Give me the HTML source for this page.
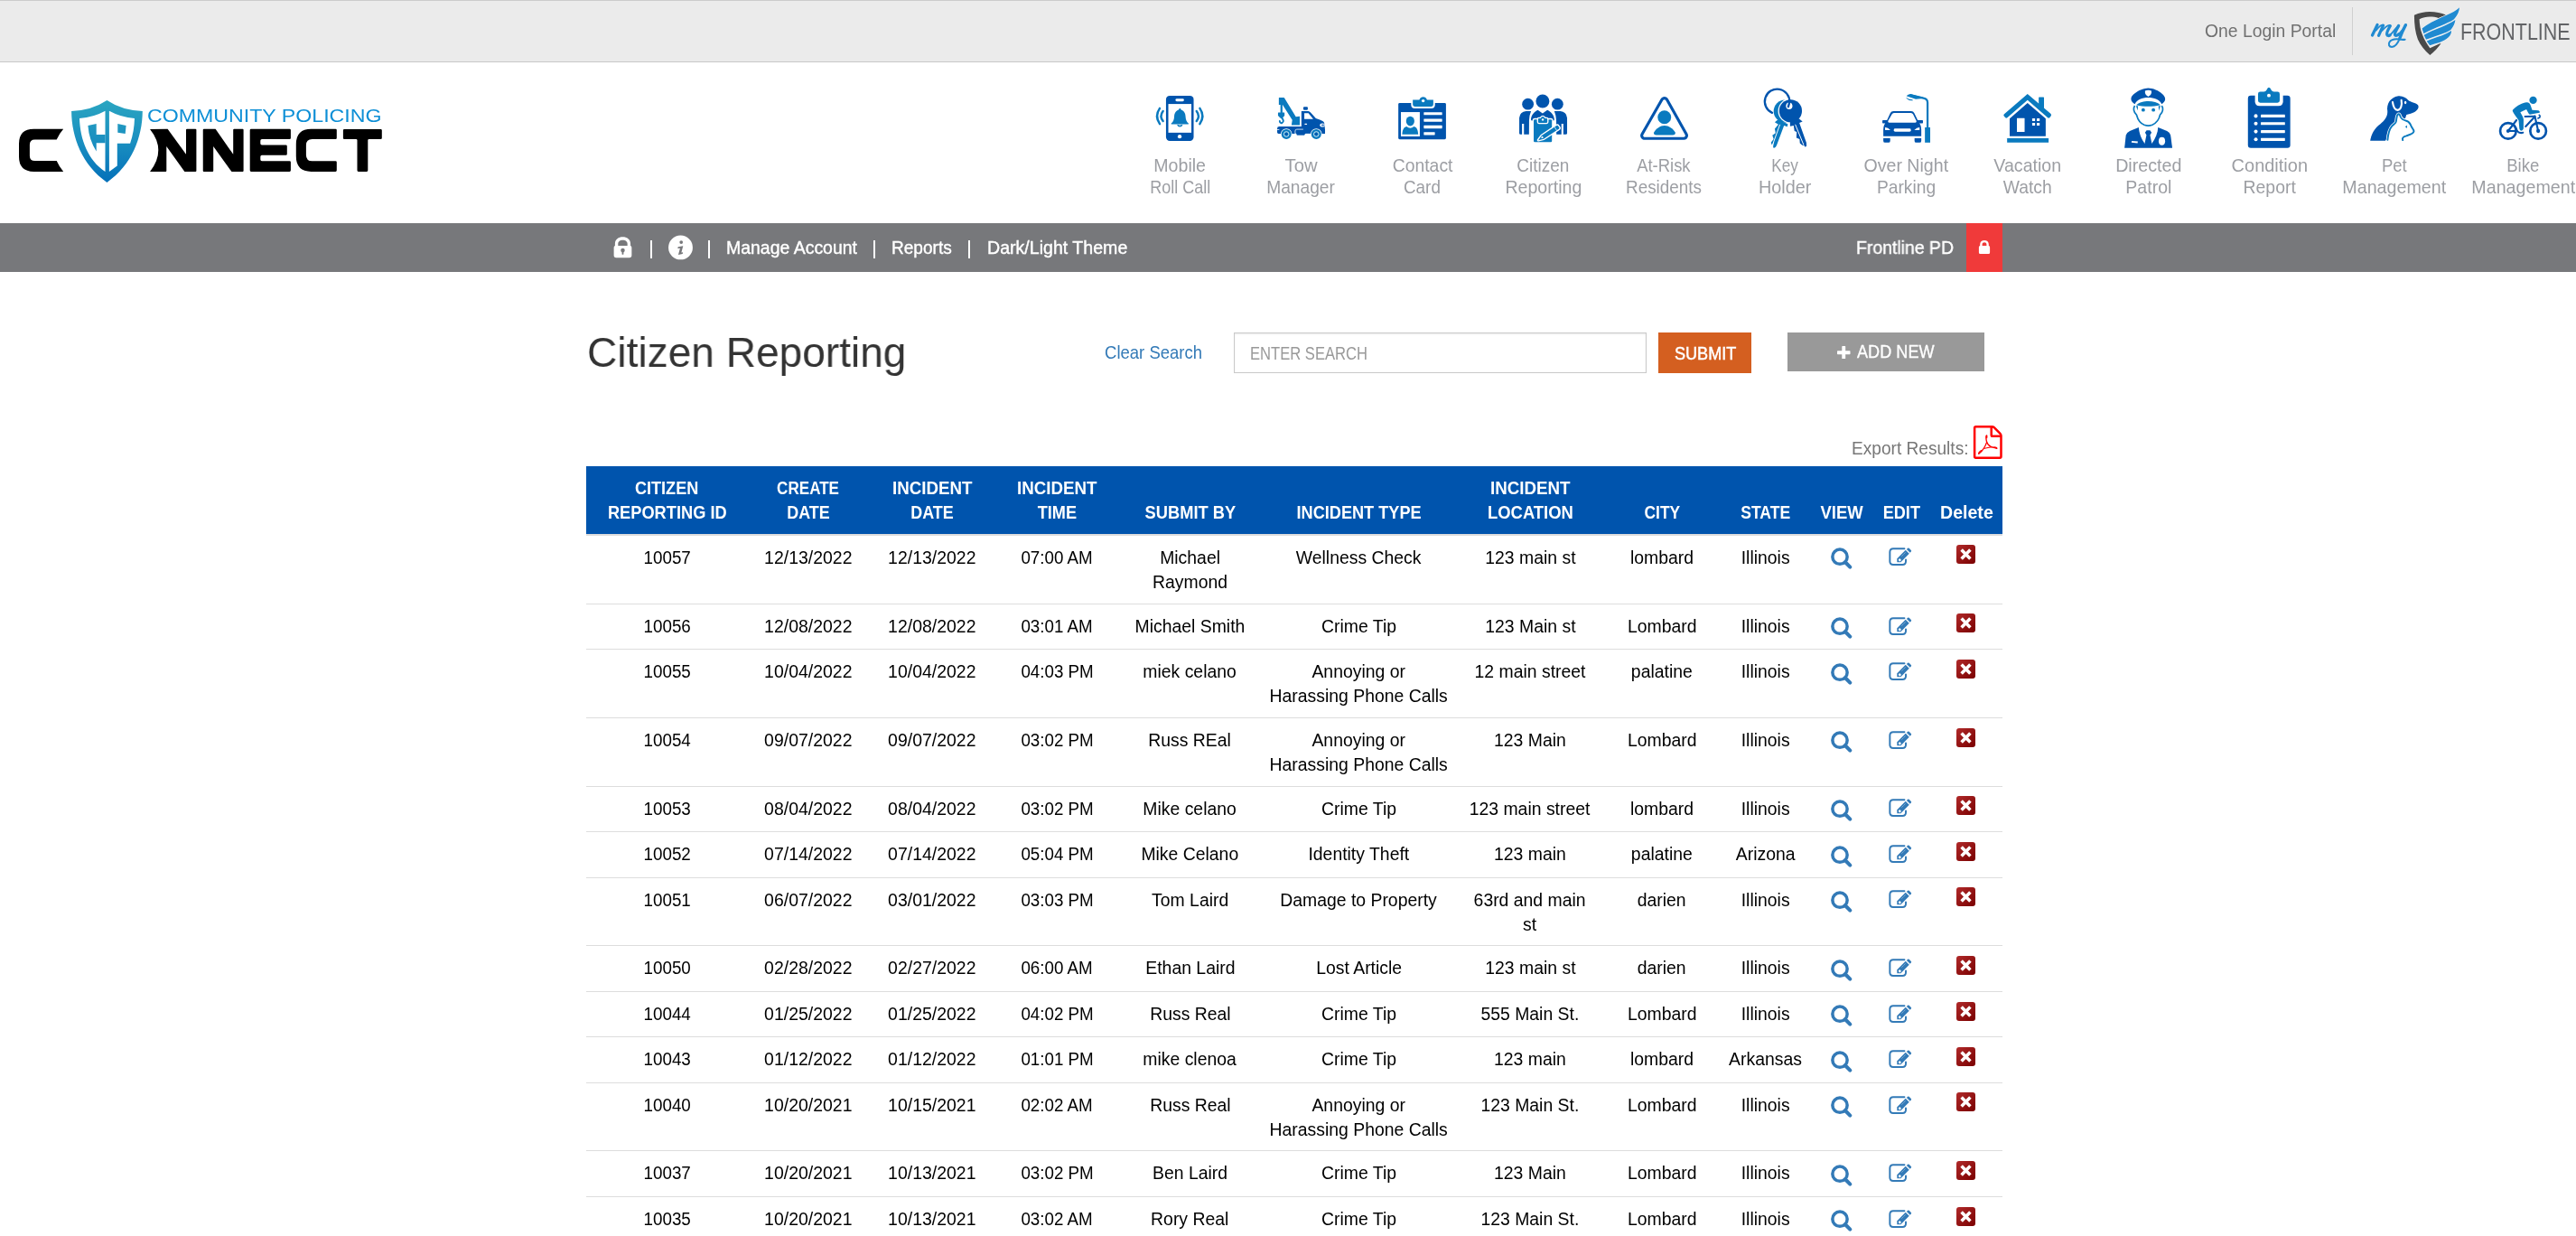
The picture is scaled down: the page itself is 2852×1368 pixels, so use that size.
<!DOCTYPE html><html><head><meta charset="utf-8"><title>Citizen Reporting</title><style>
html,body{margin:0;padding:0;background:#fff;}
#page{position:absolute;left:0;top:0;width:2852px;height:1368px;overflow:hidden;will-change:transform;}
body{width:2852px;height:1368px;overflow:hidden;position:relative;font-family:"Liberation Sans",sans-serif;color:#000;}
.tx{position:absolute;white-space:nowrap;line-height:1;display:inline-block;}
.abs{position:absolute;}
#topbar{position:absolute;left:0;top:0;width:2852px;height:67px;background:#ebebeb;border-top:1px solid #cbcbcb;border-bottom:1px solid #c8c8c8;box-sizing:content-box;}
#nav{position:absolute;left:0;top:247px;width:2852px;height:54px;background:#77787b;}
#lockbtn{position:absolute;left:2177px;top:247px;width:40px;height:54px;background:#f03a3a;}
#search{position:absolute;left:1366px;top:368px;width:457px;height:45px;box-sizing:border-box;border:1px solid #c9c9c9;background:#fff;box-shadow:inset 0 1px 2px rgba(0,0,0,.08);}
#submit{position:absolute;left:1836px;top:368px;width:103px;height:45px;background:#d45f20;}
#addnew{position:absolute;left:1979px;top:368px;width:218px;height:43px;background:#999;}
table{position:absolute;left:649px;top:516px;width:1568px;border-collapse:collapse;table-layout:fixed;font-size:19.9px;line-height:27px;}
th{font-size:19.6px;background:#0054ad;color:#fff;font-weight:700;vertical-align:bottom;padding:11.4px 0 9.6px 0;text-align:center;border-bottom:2px solid #ddd;height:54px;line-height:27px;white-space:nowrap;}
td{vertical-align:top;text-align:center;padding:11px 0 0 0;border-top:1px solid #ddd;white-space:nowrap;position:relative;}
tr.s td{height:38.46px;}
tr.d td{height:63.78px;}
tbody tr:first-child td{height:63.72px;}
tbody tr:first-child td svg{margin-top:-1px;}
.h{display:inline-block;}
.c{display:inline-block;transform:scaleX(.975);}
.c1{transform:scaleX(.945);}
.c2{transform:scaleX(.978);}
.c4{transform:scaleX(.943);}
td svg{position:absolute;}
svg.iv{left:21.2px;top:13.4px;}
svg.ie{left:13.2px;top:7.8px;}
svg.id{left:28.8px;top:10.7px;}
</style></head><body><div id="page">
<svg width="0" height="0" style="position:absolute"><defs><linearGradient id="dg" x1="0" y1="0" x2="1" y2="1"><stop offset="0" stop-color="#b02a2a"/><stop offset="1" stop-color="#7a0000"/></linearGradient><symbol id="iv" viewBox="0 0 26 26"><circle cx="11" cy="11.2" r="8.15" fill="none" stroke="#337ab7" stroke-width="3.5"/><path d="M17,17.3 L22.3,22.6" stroke="#337ab7" stroke-width="4.1" stroke-linecap="round"/></symbol><symbol id="ie" viewBox="1639.3 93.7 843 749"><path fill="none" stroke="#337ab7" stroke-width="46" stroke-linecap="round" d="M2165,263 L1875,263 Q1788,263 1788,350 L1788,590 Q1788,677 1875,677 L2115,677 Q2202,677 2202,590 L2202,548"/><path fill="#337ab7" d="M1975,520 L2195,300 L2290,395 L2070,615 L1975,615 Z"/><path fill="#337ab7" d="M2222,278 L2250,250 Q2268,235 2288,252 L2338,302 Q2355,322 2338,340 L2312,368 Z"/><path fill="#fff" d="M2010,548 L2042,515 L2082,555 L2060,590 L2030,590 Z"/><path fill="none" stroke="#fff" stroke-width="12" stroke-dasharray="14 8" d="M2090,462 L2200,352"/></symbol><symbol id="id" viewBox="0 0 21 21"><rect x="0" y="0" width="21" height="21" rx="3" fill="url(#dg)"/><path d="M5.6,5.6 L15.4,15.4 M15.4,5.6 L5.6,15.4" stroke="#fff" stroke-width="3.6"/></symbol></defs></svg>
<div id="topbar"></div>
<span class="tx" style="left:2440.50px;top:23.55px;font-size:20.5px;color:#707070;transform:scaleX(0.9437);transform-origin:left center;">One Login Portal</span>
<div class="abs" style="left:2604px;top:8px;width:1px;height:53px;background:#cfcfcf"></div>
<svg class="abs" style="left:2615px;top:2px" width="120" height="64" viewBox="0 0 2318 1236"><path fill="#4a4a4a" d="M1118,285 C1230,235 1340,212 1450,213 C1580,215 1700,240 1795,280 L1640,348 C1580,328 1520,320 1450,320 C1370,322 1300,340 1228,372 C1232,480 1250,600 1292,700 C1330,800 1390,900 1455,990 L1665,893 L1690,893 C1620,990 1540,1070 1455,1138 C1340,1040 1250,930 1195,800 C1140,660 1120,480 1118,285 Z"/><path fill="#208ad1" stroke="#f4f4f4" stroke-width="22" stroke-linejoin="round" paint-order="stroke" d="M1285,570 C1400,480 1560,400 1700,335 C1850,270 1990,215 2085,122 C2080,200 2050,290 1965,378 C1890,430 1790,470 1700,505 C1570,560 1440,610 1320,682 Z"/><path fill="#208ad1" stroke="#f4f4f4" stroke-width="22" stroke-linejoin="round" paint-order="stroke" d="M1325,712 C1440,640 1570,590 1700,540 C1800,500 1910,450 1998,388 C1990,450 1965,520 1900,600 C1840,640 1770,665 1700,692 C1590,730 1480,765 1372,808 Z"/><path fill="#208ad1" stroke="#f4f4f4" stroke-width="22" stroke-linejoin="round" paint-order="stroke" d="M1385,842 C1490,790 1600,755 1700,722 C1770,695 1850,660 1912,618 C1915,660 1900,710 1850,760 C1800,810 1730,840 1660,868 C1590,890 1520,905 1452,932 Z"/><g fill="none" stroke="#208ad1" stroke-linecap="round" stroke-linejoin="round"><path stroke-width="63" d="M330,490 L222,715"/><path stroke-width="37" d="M300,610 C340,560 400,500 440,495"/><path stroke-width="63" d="M455,505 L358,722"/><path stroke-width="37" d="M430,615 C480,560 540,505 590,500"/><path stroke-width="63" d="M605,515 C570,580 520,660 535,700 C545,730 575,730 600,712"/><path stroke-width="63" d="M785,510 C750,580 690,670 705,705 C720,735 760,720 790,690"/><path stroke-width="37" d="M600,712 C650,670 720,570 785,505"/><path stroke-width="63" d="M935,495 C890,580 840,690 805,790"/><path stroke-width="37" d="M790,690 C840,640 900,560 945,490"/><path stroke-width="40" d="M805,790 C770,880 720,960 640,965 C580,965 560,910 590,860 C630,800 720,790 800,800 C850,810 890,810 920,805"/></g></svg>
<span class="tx" style="left:2724.40px;top:22.82px;font-size:24.9px;color:#626366;transform:scaleX(0.8620);transform-origin:left center;">FRONTLINE</span>
<svg class="abs" style="left:0;top:100px" width="440" height="110" viewBox="0 100 440 110"><defs><linearGradient id="lg" gradientUnits="userSpaceOnUse" x1="0" y1="111" x2="0" y2="202"><stop offset="0" stop-color="#2aa5c1"/><stop offset="0.5" stop-color="#1a8fc0"/><stop offset="1" stop-color="#0470b9"/></linearGradient></defs><path fill="#000" d="M37.4,142.7 L70.2,142.7 Q65.5,148 62.7,154.4 L38.6,154.4 Q32.9,154.4 32.9,160.1 L32.9,172.4 Q32.9,178.1 38.6,178.1 L62.7,178.1 Q65.5,184.5 70.2,189.9 L37.4,189.9 Q21,189.9 21,173.5 L21,159.1 Q21,142.7 37.4,142.7 Z"/><path fill="url(#lg)" d="M118.45,111.1 Q101.8,122.2 79.1,123.1 C79.3,152 91,183 118.45,201.9 C145.9,183 157.6,152 157.8,123.1 Q135.1,122.2 118.45,111.1 Z"/><path fill="#fff" d="M116.5,122.7 Q104,129.6 88,131.1 C88.6,154 97.5,178 116.5,189.9 Z"/><path fill="#fff" d="M120.9,122.7 Q133.5,129.6 149,131.1 Q148.6,146 144.1,158.7 L129.8,158.7 L129.8,183.6 L120.9,189.9 Z"/><path fill="url(#lg)" d="M130.3,136.9 L139.6,139.1 L138.7,148 L130.3,146.7 Z"/><path fill="url(#lg)" d="M97.4,139.1 L106.7,136.9 L106.7,148.9 L116.6,148.9 L116.6,158.3 L106.7,158.3 L106.7,167.6 Q98.6,155 97.4,139.1 Z"/><path fill="#000" d="M166.05,143 L185.6,142.8 L206,170.8 L206,143.8 Q206,142.8 207,142.8 L216.4,142.8 Q217.4,142.8 217.4,143.8 L217.4,189.1 Q217.4,190.1 216.4,190.1 L204.4,190.1 L184.3,162.1 L184.3,189.1 Q184.3,190.1 183.3,190.1 L166.05,189.9 Q184.6,166.4 166.05,143 Z"/><path fill="#000" d="M225.75,142.8 L238.6,142.8 L258.2,170.8 L258.2,143.8 Q258.2,142.8 259.2,142.8 L268.6,142.8 Q269.6,142.8 269.6,143.8 L269.6,189.1 Q269.6,190.1 268.6,190.1 L256.5,190.1 L236.2,162.1 L236.2,189.1 Q236.2,190.1 235.2,190.1 L225.75,190.1 Q224.75,190.1 224.75,189.1 L224.75,143.8 Q224.75,142.8 225.75,142.8 Z"/><path fill="#000" d="M278,142.7 L320.6,142.7 Q321.9,142.7 321.9,144 L321.9,152.7 Q321.9,154 320.6,154 L290,154 Q288.3,154 288.3,155.7 L288.3,158.8 Q288.3,160.5 290,160.5 L316.5,160.5 Q317.8,160.5 317.8,161.8 L317.8,170.4 Q317.8,171.7 316.5,171.7 L290,171.7 Q288.3,171.7 288.3,173.4 L288.3,176.5 Q288.3,178.2 290,178.2 L320.6,178.2 Q321.9,178.2 321.9,179.5 L321.9,188.6 Q321.9,189.9 320.6,189.9 L278,189.9 Q276.7,189.9 276.7,188.6 L276.7,144 Q276.7,142.7 278,142.7 Z"/><path fill="#000" d="M344.6,142.7 L371.5,142.7 Q372.8,142.7 372.8,144 L372.8,152.7 Q372.8,154 371.5,154 L345.7,154 Q338.9,154 338.9,160.8 L338.9,171.4 Q338.9,178.2 345.7,178.2 L371.5,178.2 Q372.8,178.2 372.8,179.5 L372.8,188.6 Q372.8,189.9 371.5,189.9 L344.6,189.9 Q327.8,189.9 327.8,173.1 L327.8,159.5 Q327.8,142.7 344.6,142.7 Z"/><path fill="#000" d="M381.2,143 L421.5,143 Q422.8,143 422.8,144.3 L422.8,152.7 Q422.8,154 421.5,154 L408.6,154 Q407.3,154 407.3,155.3 L407.3,188.6 Q407.3,189.9 406,189.9 L396.8,189.9 Q395.5,189.9 395.5,188.6 L395.5,155.3 Q395.5,154 394.2,154 L381.2,154 Q379.9,154 379.9,152.7 L379.9,144.3 Q379.9,143 381.2,143 Z"/></svg>
<span class="tx" style="left:163.20px;top:117.97px;font-size:20px;color:#0d8fd6;transform:scaleX(1.1580);transform-origin:left center;">COMMUNITY POLICING</span>
<svg class="abs" style="left:1270px;top:98px" width="72" height="66" viewBox="0 0 1348 1236"><rect x="392" y="148" width="573" height="937" rx="78" fill="#0054ad"/>
<rect x="440" y="320" width="478" height="595" fill="#fff"/>
<rect x="588" y="212" width="177" height="56" rx="28" fill="#fff"/>
<circle cx="675" cy="997" r="40" fill="#fff"/>
<path fill="#0a7abf" d="M680,405 Q700,420 705,440 C770,460 795,520 797,580 C800,650 820,690 858,722 L858,738 L500,738 L500,722 C540,690 560,650 562,580 C565,520 590,460 655,440 Q660,420 680,405 Z"/>
<path fill="#0a7abf" d="M620,748 L738,748 Q725,795 679,795 Q633,795 620,748 Z"/>
<path fill="#fff" opacity=".55" d="M645,750 L712,750 Q700,772 679,772 Q658,772 645,750 Z"/>
<g fill="none" stroke="#0a7abf" stroke-width="46" stroke-linecap="round">
<path d="M262,410 Q150,572 262,733"/><path d="M330,468 Q250,572 330,675"/>
<path d="M1093,410 Q1205,572 1093,733"/><path d="M1025,468 Q1105,572 1025,675"/></g></svg>
<span class="tx" style="left:1277.46px;top:174.04px;font-size:19.8px;color:#9c9ea3;transform:scaleX(0.9900);transform-origin:center center;">Mobile</span>
<span class="tx" style="left:1269.77px;top:197.84px;font-size:19.8px;color:#9c9ea3;transform:scaleX(0.9110);transform-origin:center center;">Roll Call</span>
<svg class="abs" style="left:1404px;top:98px" width="72" height="66" viewBox="0 0 1348 1236"><path fill="#0a7abf" d="M222,192 Q222,185 230,185 L322,185 Q330,185 335,193 L575,585 L655,575 L655,760 L485,760 L500,650 L300,335 L222,335 Z"/>
<rect x="255" y="330" width="42" height="175" fill="#0a7abf"/>
<path fill="#0a7abf" d="M205,505 Q205,498 212,498 L333,498 Q340,498 340,505 L340,560 L300,610 L250,610 L205,560 Z"/>
<path fill="none" stroke="#0a7abf" stroke-width="36" stroke-linecap="round" d="M275,600 C320,640 330,690 290,712 C265,722 240,705 240,672"/>
<rect x="730" y="378" width="92" height="68" rx="18" fill="#0054ad"/>
<path fill="#0054ad" d="M690,470 L830,470 Q860,475 880,495 L990,620 Q1080,650 1130,675 Q1160,690 1165,720 L1180,850 L1180,925 Q1180,935 1170,935 L215,935 Q188,935 188,908 L188,830 Q188,785 230,785 L690,785 Z"/>
<path fill="#fff" d="M750,510 L835,510 L935,632 L750,632 Z"/>
<rect x="755" y="728" width="52" height="20" rx="8" fill="#fff"/>
<rect x="186" y="846" width="45" height="14" fill="#fff"/>
<ellipse cx="1125" cy="757" rx="52" ry="38" fill="#fff"/><ellipse cx="1135" cy="757" rx="34" ry="18" fill="#0054ad" opacity=".75"/>
<path fill="#0054ad" stroke="#fff" stroke-width="14" d="M560,880 Q560,845 595,845 L720,845 L900,845 L900,935 L775,935 Q770,975 740,975 L610,975 Q580,975 578,935 L560,935 Z"/>
<rect x="730" y="800" width="200" height="130" fill="#0054ad"/>
<circle cx="378" cy="945" r="118" fill="#fff"/><circle cx="378" cy="945" r="103" fill="#0a7abf"/><circle cx="378" cy="945" r="52" fill="none" stroke="#fff" stroke-width="15"/><circle cx="378" cy="945" r="26" fill="#0054ad"/>
<circle cx="998" cy="945" r="118" fill="#fff"/><circle cx="998" cy="945" r="103" fill="#0a7abf"/><circle cx="998" cy="945" r="52" fill="none" stroke="#fff" stroke-width="15"/><circle cx="998" cy="945" r="26" fill="#0054ad"/></svg>
<span class="tx" style="left:1422.91px;top:174.04px;font-size:19.8px;color:#9c9ea3;transform:scaleX(1.0231);transform-origin:center center;">Tow</span>
<span class="tx" style="left:1401.46px;top:197.84px;font-size:19.8px;color:#9c9ea3;transform:scaleX(0.9708);transform-origin:center center;">Manager</span>
<svg class="abs" style="left:1538px;top:98px" width="72" height="66" viewBox="0 0 1348 1236"><rect x="190" y="300" width="988" height="755" rx="28" fill="#0054ad"/>
<path fill="#fff" d="M455,230 L950,230 L950,335 Q950,410 875,410 L530,410 Q455,410 455,335 Z"/>
<path fill="#0a7abf" d="M490,232 L625,232 Q650,175 705,175 Q760,175 785,232 L915,232 L915,325 Q915,375 865,375 L540,375 Q490,375 490,325 Z"/>
<circle cx="705" cy="255" r="32" fill="#fff"/>
<rect x="243" y="488" width="392" height="504" fill="#fff"/>
<ellipse cx="437" cy="675" rx="86" ry="100" fill="#0a7abf"/>
<path fill="#0a7abf" d="M270,950 C275,860 300,800 360,785 Q437,850 515,785 C575,800 598,860 602,950 Z"/>
<rect x="718" y="490" width="380" height="60" rx="8" fill="#fff"/><rect x="718" y="626" width="380" height="62" rx="8" fill="#fff"/><rect x="718" y="765" width="380" height="62" rx="8" fill="#fff"/><rect x="718" y="902" width="230" height="62" rx="8" fill="#fff"/></svg>
<span class="tx" style="left:1540.51px;top:174.04px;font-size:19.8px;color:#9c9ea3;transform:scaleX(0.9782);transform-origin:center center;">Contact</span>
<span class="tx" style="left:1553.15px;top:197.84px;font-size:19.8px;color:#9c9ea3;transform:scaleX(0.9536);transform-origin:center center;">Card</span>
<svg class="abs" style="left:1672px;top:98px" width="72" height="66" viewBox="0 0 1348 1236"><circle cx="367" cy="322" r="120" fill="#0054ad"/><circle cx="672" cy="262" r="140" fill="#0054ad"/><circle cx="980" cy="322" r="120" fill="#0054ad"/>
<path fill="#0054ad" d="M188,925 L188,610 Q200,480 330,470 L432,470 Q395,560 392,660 L390,950 L285,950 L285,730 L245,730 L245,950 L215,950 Q188,950 188,925 Z"/>
<path fill="#0054ad" d="M1180,925 L1180,610 Q1168,480 1038,470 L915,470 Q952,560 955,660 L958,950 L1062,950 L1062,730 L1102,730 L1102,950 L1153,950 Q1180,950 1180,925 Z"/>
<path fill="#0054ad" d="M430,640 C440,540 500,480 572,445 L672,515 L770,445 C845,480 905,540 915,640 Q915,665 890,665 L455,665 Q430,665 430,640 Z"/>
<rect x="487" y="640" width="378" height="470" rx="22" fill="#0a7abf" stroke="#fff" stroke-width="50" paint-order="stroke"/>
<path fill="#0a7abf" stroke="#fff" stroke-width="50" paint-order="stroke" stroke-linejoin="round" d="M580,635 Q580,620 595,620 L630,620 Q650,580 675,580 Q700,580 720,620 L755,620 Q770,620 770,635 L770,695 Q770,710 755,710 L595,710 Q580,710 580,695 Z"/>
<circle cx="675" cy="645" r="22" fill="#fff"/>
<path fill="#0a7abf" stroke="#fff" stroke-width="52" paint-order="stroke" stroke-linejoin="round" d="M582,1070 L651,976 L962,768 Q982,756 996,776 L1016,806 Q1028,826 1008,838 L695,1042 Z"/>
<path fill="none" stroke="#fff" stroke-width="14" d="M915,792 L965,868"/>
<path fill="#fff" d="M640,1008 L672,990 L690,1020 L652,1034 Z"/></svg>
<span class="tx" style="left:1678.47px;top:174.04px;font-size:19.8px;color:#9c9ea3;transform:scaleX(0.9592);transform-origin:center center;">Citizen</span>
<span class="tx" style="left:1665.81px;top:197.84px;font-size:19.8px;color:#9c9ea3;transform:scaleX(0.9897);transform-origin:center center;">Reporting</span>
<svg class="abs" style="left:1806px;top:98px" width="72" height="66" viewBox="0 0 1348 1236"><path d="M688,260 L278,975 L1090,975 Z" fill="#0054ad" stroke="#0054ad" stroke-width="180" stroke-linejoin="round"/>
<path d="M688,260 L278,975 L1090,975 Z" fill="#fff" stroke="#fff" stroke-width="62" stroke-linejoin="round"/>
<circle cx="688" cy="595" r="140" fill="#0a7abf"/>
<path fill="#0a7abf" d="M468,915 C520,830 600,770 688,770 C780,770 860,830 915,915 Q918,965 860,965 L520,965 Q462,965 468,915 Z"/></svg>
<span class="tx" style="left:1810.33px;top:174.04px;font-size:19.8px;color:#9c9ea3;transform:scaleX(0.9318);transform-origin:center center;">At-Risk</span>
<span class="tx" style="left:1798.22px;top:197.84px;font-size:19.8px;color:#9c9ea3;transform:scaleX(0.9537);transform-origin:center center;">Residents</span>
<svg class="abs" style="left:1940px;top:92px" width="72" height="76" viewBox="0 0 1171 1236"><circle cx="590" cy="505" r="205" fill="#0a7abf"/>
<path fill="#0a7abf" d="M405,705 L460,660 L640,735 L632,785 L572,765 L440,1120 Q425,1160 395,1168 L375,1160 L380,1110 L395,1060 L350,1110 L338,1065 L385,1010 L362,940 L420,900 L405,822 L470,745 Z"/>
<path fill="none" stroke="#fff" stroke-width="16" d="M498,745 L372,1095"/>
<circle cx="690" cy="500" r="226" fill="#fff"/>
<circle cx="690" cy="500" r="205" fill="#0054ad"/>
<path fill="#0054ad" d="M680,700 L840,640 L905,690 L848,715 L975,1075 L978,1130 L955,1152 L930,1120 L900,1118 L858,1080 L852,1010 L795,985 L800,880 L760,862 L745,765 L682,778 Z"/>
<path fill="none" stroke="#fff" stroke-width="16" d="M775,745 L925,1110"/>
<ellipse cx="665" cy="410" rx="58" ry="62" fill="#fff"/>
<path fill="none" stroke="#0054ad" stroke-width="38" stroke-linecap="round" d="M358,534 A223,223 0 1 1 671,345 L648,425"/></svg>
<span class="tx" style="left:1959.35px;top:174.04px;font-size:19.8px;color:#9c9ea3;transform:scaleX(0.8711);transform-origin:center center;">Key</span>
<span class="tx" style="left:1947.26px;top:197.84px;font-size:19.8px;color:#9c9ea3;transform:scaleX(1.0020);transform-origin:center center;">Holder</span>
<svg class="abs" style="left:2074px;top:98px" width="72" height="66" viewBox="0 0 1348 1236"><path fill="#0054ad" d="M280,665 L352,510 Q372,470 420,470 L785,470 Q830,470 850,510 L925,665 Q995,760 995,850 L995,990 L208,990 L208,850 Q208,760 280,665 Z"/>
<rect x="188" y="655" width="130" height="65" rx="14" fill="#0054ad"/><rect x="900" y="655" width="130" height="65" rx="14" fill="#0054ad"/>
<path fill="#fff" d="M430,505 L780,505 Q812,505 825,535 L895,672 Q900,705 870,708 L330,708 Q298,705 305,672 L385,535 Q398,505 430,505 Z"/>
<path fill="#fff" d="M245,862 L245,805 Q300,800 355,862 Z"/><path fill="#fff" d="M960,862 L960,805 Q905,800 850,862 Z"/>
<rect x="425" y="830" width="355" height="62" rx="28" fill="#fff"/>
<path fill="#0054ad" d="M208,1030 L350,1030 L350,1085 Q350,1120 315,1120 L243,1120 Q208,1120 208,1085 Z"/><path fill="#0054ad" d="M855,1030 L995,1030 L995,1085 Q995,1120 960,1120 L890,1120 Q855,1120 855,1085 Z"/>
<rect x="1070" y="805" width="110" height="315" fill="#0a7abf"/>
<path fill="none" stroke="#0a7abf" stroke-width="42" d="M1125,810 L1125,290 Q1125,215 1040,200 L760,135"/>
<path fill="#0a7abf" d="M685,155 Q720,115 770,112 L1060,190 L985,212 L880,218 Z"/>
<path fill="#0a7abf" d="M678,198 Q740,262 822,246 L812,228 Q735,228 692,192 Z"/></svg>
<span class="tx" style="left:2063.33px;top:174.04px;font-size:19.8px;color:#9c9ea3;transform:scaleX(0.9900);transform-origin:center center;">Over Night</span>
<span class="tx" style="left:2077.06px;top:197.84px;font-size:19.8px;color:#9c9ea3;transform:scaleX(0.9720);transform-origin:center center;">Parking</span>
<svg class="abs" style="left:2208px;top:98px" width="72" height="66" viewBox="0 0 1348 1236"><rect x="920" y="178" width="110" height="250" rx="8" fill="#0a7abf"/>
<path fill="#0a7abf" d="M688,112 L1172,525 Q1190,548 1172,570 L1145,605 Q1128,622 1108,605 L688,240 L268,605 Q248,622 230,605 L200,570 Q182,548 205,528 Z"/>
<path fill="#0054ad" d="M688,300 L1065,625 L1065,980 Q1065,990 1055,990 L328,990 Q318,990 318,980 L318,625 Z"/>
<rect x="468" y="612" width="160" height="286" rx="6" fill="#fff"/>
<rect x="785" y="618" width="60" height="58" rx="10" fill="#fff"/><rect x="880" y="618" width="60" height="58" rx="10" fill="#fff"/><rect x="785" y="712" width="60" height="58" rx="10" fill="#fff"/><rect x="880" y="712" width="60" height="58" rx="10" fill="#fff"/>
<rect x="265" y="1030" width="860" height="90" rx="8" fill="#0a7abf"/></svg>
<span class="tx" style="left:2206.64px;top:174.04px;font-size:19.8px;color:#9c9ea3;transform:scaleX(0.9905);transform-origin:center center;">Vacation</span>
<span class="tx" style="left:2216.74px;top:197.84px;font-size:19.8px;color:#9c9ea3;transform:scaleX(0.9742);transform-origin:center center;">Watch</span>
<svg class="abs" style="left:2342px;top:92px" width="72" height="76" viewBox="0 0 1171 1236"><path fill="#0054ad" d="M350,378 C270,330 260,260 330,200 C420,120 520,90 590,88 C680,90 780,130 850,200 C920,270 910,330 835,378 C800,300 700,262 590,262 C480,262 390,300 350,378 Z"/>
<path fill="#fff" d="M535,140 Q592,108 650,140 L650,178 Q640,225 592,242 Q545,225 535,178 Z"/>
<path fill="#0a7abf" d="M375,395 C430,340 520,325 592,325 C680,325 760,345 812,395 C740,412 660,420 592,420 C520,420 440,412 375,395 Z"/>
<path fill="none" stroke="#0a7abf" stroke-width="28" stroke-linejoin="round" d="M350,408 C318,450 325,520 382,572 C400,640 440,720 520,752 Q592,778 665,752 C740,720 790,640 805,572 C860,520 868,450 835,408"/>
<path fill="#0a7abf" d="M372,412 L408,412 L402,492 Z"/><path fill="#0a7abf" d="M812,412 L776,412 L784,496 Z"/>
<circle cx="502" cy="482" r="32" fill="#0a7abf"/><circle cx="685" cy="482" r="32" fill="#0a7abf"/>
<path fill="#0054ad" d="M165,1165 L190,940 Q205,885 260,860 L420,795 L770,795 L930,860 Q985,885 995,940 L1025,1165 Z"/>
<path fill="#fff" d="M420,785 L770,785 C765,900 720,1000 655,1090 L530,1090 C470,1010 425,900 420,785 Z"/>
<path fill="#0054ad" d="M562,850 L625,850 L652,890 L625,937 L660,1100 L525,1100 L560,937 L535,890 Z"/>
<path fill="#fff" d="M295,1040 L405,1050 L400,1082 L290,1070 Z"/>
<ellipse cx="838" cy="1045" rx="58" ry="72" fill="#fff"/></svg>
<span class="tx" style="left:2341.56px;top:174.04px;font-size:19.8px;color:#9c9ea3;transform:scaleX(0.9963);transform-origin:center center;">Directed</span>
<span class="tx" style="left:2352.56px;top:197.84px;font-size:19.8px;color:#9c9ea3;transform:scaleX(0.9867);transform-origin:center center;">Patrol</span>
<svg class="abs" style="left:2476px;top:92px" width="72" height="76" viewBox="0 0 1171 1236"><rect x="208" y="225" width="762" height="943" rx="52" fill="#0054ad"/>
<path fill="#fff" d="M335,170 L840,170 L840,330 Q840,412 758,412 L417,412 Q335,412 335,330 Z"/>
<path fill="#0a7abf" d="M430,155 L495,155 Q528,150 545,120 Q562,78 585,78 Q610,78 627,120 Q644,150 678,155 L740,155 Q780,155 780,195 L780,315 Q780,355 740,355 L430,355 Q390,355 390,315 L390,195 Q390,155 430,155 Z"/>
<circle cx="585" cy="222" r="32" fill="#fff"/>
<circle cx="350" cy="592" r="33" fill="#fff"/><rect x="440" y="566" width="435" height="52" rx="6" fill="#fff"/><circle cx="350" cy="728" r="33" fill="#fff"/><rect x="440" y="702" width="435" height="52" rx="6" fill="#fff"/><circle cx="350" cy="872" r="33" fill="#fff"/><rect x="440" y="846" width="435" height="52" rx="6" fill="#fff"/><circle cx="350" cy="1013" r="33" fill="#fff"/><rect x="440" y="987" width="435" height="52" rx="6" fill="#fff"/></svg>
<span class="tx" style="left:2470.71px;top:174.04px;font-size:19.8px;color:#9c9ea3;transform:scaleX(1.0098);transform-origin:center center;">Condition</span>
<span class="tx" style="left:2482.81px;top:197.84px;font-size:19.8px;color:#9c9ea3;transform:scaleX(0.9819);transform-origin:center center;">Report</span>
<svg class="abs" style="left:2614px;top:98px" width="72" height="66" viewBox="0 0 1348 1236"><path fill="#0054ad" d="M190,1082 C210,950 280,820 400,735 C500,660 552,570 548,470 C525,330 600,180 775,155 C870,148 935,195 975,238 C1035,290 1130,285 1180,340 C1212,390 1170,450 1100,490 C1040,520 985,530 942,545 L915,625 L860,615 C800,650 740,720 700,800 L505,1082 Z"/>
<path fill="none" stroke="#fff" stroke-width="40" stroke-linecap="round" d="M655,282 C668,380 690,442 760,446 C832,440 852,330 836,240"/>
<ellipse cx="920" cy="290" rx="22" ry="31" fill="#fff"/>
<path fill="#fff" stroke="#fff" stroke-width="64" stroke-linejoin="round" d="M550,1075 C560,960 570,860 640,780 C680,740 720,720 725,690 C740,640 730,560 770,530 C800,520 810,560 820,590 C840,640 900,660 950,675 C1000,690 1020,730 1040,780 C1060,830 1100,850 1095,890 C1080,940 1000,960 940,980 C890,995 860,1010 860,1040 L865,1085 Z"/>
<path fill="#fff" stroke="#0a7abf" stroke-width="36" stroke-linejoin="round" stroke-linecap="round" d="M550,1065 C560,960 570,860 640,780 C680,740 720,720 725,690 C740,640 730,560 770,530 C800,520 810,560 820,590 C840,640 900,660 950,675 C1000,690 1020,730 1040,780 C1060,830 1100,850 1095,890 C1080,940 1000,960 940,980 C890,995 860,1010 860,1040 L865,1075"/>
<rect x="500" y="1085" width="420" height="60" fill="#fff"/>
<path fill="#0a7abf" d="M914,792 L954,764 L954,822 Z"/></svg>
<span class="tx" style="left:2636.15px;top:174.04px;font-size:19.8px;color:#9c9ea3;transform:scaleX(0.9359);transform-origin:center center;">Pet</span>
<span class="tx" style="left:2593.27px;top:197.84px;font-size:19.8px;color:#9c9ea3;transform:scaleX(0.9942);transform-origin:center center;">Management</span>
<svg class="abs" style="left:2757px;top:98px" width="72" height="66" viewBox="0 0 1348 1236"><g fill="none" stroke="#0054ad" stroke-width="50" stroke-linecap="round" stroke-linejoin="round">
<circle cx="372" cy="878" r="165"/><circle cx="995" cy="878" r="165"/>
<path stroke-width="40" d="M372,880 L545,655"/><path stroke-width="38" d="M372,880 L560,880 Q600,935 680,915"/>
<path stroke-width="36" d="M480,745 Q520,760 560,880"/>
<path stroke-width="40" d="M735,785 L905,605"/><path stroke-width="38" d="M722,580 L925,575"/>
<path stroke-width="40" d="M925,572 L995,880"/>
<path stroke-width="30" d="M1015,548 Q1045,560 1025,600 L990,618"/></g>
<circle cx="370" cy="880" r="36" fill="#0054ad"/><circle cx="995" cy="880" r="40" fill="#0054ad"/>
<circle cx="890" cy="242" r="78" fill="#0a7abf"/>
<path fill="#0a7abf" stroke="#fff" stroke-width="26" paint-order="stroke" stroke-linejoin="round" d="M470,440 C520,380 650,290 760,285 C800,285 830,310 845,370 L870,445 L1000,455 Q1040,475 1022,502 L820,537 Q795,522 785,495 L750,430 L625,490 C660,560 690,600 692,640 L690,830 Q680,875 645,875 Q610,870 605,830 L590,660 C540,580 480,520 465,470 Q462,452 470,440 Z"/></svg>
<span class="tx" style="left:2774.46px;top:174.04px;font-size:19.8px;color:#9c9ea3;transform:scaleX(0.9380);transform-origin:center center;">Bike</span>
<span class="tx" style="left:2735.97px;top:197.84px;font-size:19.8px;color:#9c9ea3;transform:scaleX(0.9942);transform-origin:center center;">Management</span>
<div id="nav"></div><div id="lockbtn"></div>
<svg class="abs" style="left:600px;top:230px" width="200" height="100" viewBox="0 0 2472 1236"><path fill="#fff" d="M1000,520 L1000,490 C1000,430 1050,398 1106,398 C1162,398 1212,430 1212,490 L1212,520 Q1228,525 1228,545 L1228,650 Q1228,682 1196,682 L1016,682 Q984,682 984,650 L984,545 Q984,525 1000,520 Z M1042,518 L1170,518 L1170,492 C1170,460 1140,442 1106,442 C1072,442 1042,460 1042,492 Z"/><circle cx="1106" cy="580" r="28" fill="#77787b"/><path fill="#77787b" d="M1092,585 L1120,585 L1116,640 L1096,640 Z"/><circle cx="1897" cy="543" r="166" fill="#fff"/><circle cx="1906" cy="470" r="23" fill="#77787b"/><path fill="#77787b" d="M1862,535 L1932,523 L1908,612 L1930,608 L1925,630 L1866,644 L1890,554 L1858,557 Z"/></svg>

<svg class="abs" style="left:2186px;top:262px" width="22" height="22" viewBox="0 0 22 22"><path fill="#fff" d="M6.2,10 L6.2,8.3 C6.2,5.5 8.3,4 11,4 C13.7,4 15.8,5.5 15.8,8.3 L15.8,10 Q17.1,10.2 17.1,11.5 L17.1,17.5 Q17.1,19 15.6,19 L6.4,19 Q4.9,19 4.9,17.5 L4.9,11.5 Q4.9,10.2 6.2,10 Z M8.6,10 L13.4,10 L13.4,8.4 C13.4,6.9 12.3,6.2 11,6.2 C9.7,6.2 8.6,6.9 8.6,8.4 Z"/></svg>
<div class="abs" style="left:720.3px;top:266px;width:1.6px;height:20px;background:#fff"></div>
<div class="abs" style="left:784.3px;top:266px;width:1.6px;height:20px;background:#fff"></div>
<div class="abs" style="left:967.3px;top:266px;width:1.6px;height:20px;background:#fff"></div>
<div class="abs" style="left:1072.3px;top:266px;width:1.6px;height:20px;background:#fff"></div>
<span class="tx" style="left:804.30px;top:264.37px;font-size:20px;color:#fff;transform:scaleX(0.9732);transform-origin:left center;-webkit-text-stroke:0.4px #fff;">Manage Account</span>
<span class="tx" style="left:987.30px;top:264.37px;font-size:20px;color:#fff;transform:scaleX(0.9524);transform-origin:left center;-webkit-text-stroke:0.4px #fff;">Reports</span>
<span class="tx" style="left:1092.50px;top:264.37px;font-size:20px;color:#fff;transform:scaleX(0.9792);transform-origin:left center;-webkit-text-stroke:0.4px #fff;">Dark/Light Theme</span>
<span class="tx" style="left:2055.30px;top:264.37px;font-size:20px;color:#fff;transform:scaleX(0.9716);transform-origin:left center;-webkit-text-stroke:0.4px #fff;">Frontline PD</span>
<span class="tx" style="left:649.50px;top:366.21px;font-size:47.0px;color:#333;transform:scaleX(0.9805);transform-origin:left center;">Citizen Reporting</span>
<span class="tx" style="left:1223.30px;top:380.74px;font-size:19.8px;color:#337ab7;transform:scaleX(0.9363);transform-origin:left center;">Clear Search</span>
<div id="search"></div>
<span class="tx" style="left:1384.00px;top:381.84px;font-size:19.8px;color:#999;transform:scaleX(0.8388);transform-origin:left center;">ENTER SEARCH</span>
<div id="submit"></div>
<span class="tx" style="left:1853.50px;top:381.74px;font-size:19.8px;color:#fff;transform:scaleX(0.9139);transform-origin:left center;-webkit-text-stroke:0.5px #fff;">SUBMIT</span>
<div id="addnew"></div>
<svg class="abs" style="left:2034px;top:382.5px" width="14.5" height="14.5" viewBox="0 0 14.5 14.5"><path fill="#fff" d="M5.3,0.6 Q5.3,0 5.9,0 L8.6,0 Q9.2,0 9.2,0.6 L9.2,5.3 L13.9,5.3 Q14.5,5.3 14.5,5.9 L14.5,8.6 Q14.5,9.2 13.9,9.2 L9.2,9.2 L9.2,13.9 Q9.2,14.5 8.6,14.5 L5.9,14.5 Q5.3,14.5 5.3,13.9 L5.3,9.2 L0.6,9.2 Q0,9.2 0,8.6 L0,5.9 Q0,5.3 0.6,5.3 L5.3,5.3 Z"/></svg>
<span class="tx" style="left:2055.70px;top:380.34px;font-size:19.8px;color:#fff;transform:scaleX(0.9163);transform-origin:left center;-webkit-text-stroke:0.3px #fff;">ADD NEW</span>
<span class="tx" style="left:2050.20px;top:486.98px;font-size:19.4px;color:#777;transform:scaleX(0.9849);transform-origin:left center;">Export Results:</span>
<svg class="abs" style="left:2176px;top:464px" width="50" height="50" viewBox="0 0 1236 1236"><g fill="none" stroke="#ff0000" stroke-linejoin="round" stroke-linecap="round"><path stroke-width="62" d="M285,204 L735,204 Q760,204 780,222 L945,385 Q976,415 976,450 L976,1020 Q976,1056 940,1056 L285,1056 Q250,1056 250,1020 L250,240 Q250,204 285,204 Z"/><path stroke-width="62" d="M710,215 L710,430 Q710,462 742,462 L960,462"/><path stroke-width="34" d="M580,448 C556,500 568,575 590,640 C628,720 700,762 765,772 C830,768 872,790 848,800"/><path stroke-width="44" d="M790,778 C820,775 850,785 855,795"/><path stroke-width="30" d="M585,625 C545,745 470,860 385,928"/><path stroke-width="48" d="M430,868 C400,885 372,915 368,938"/><path stroke-width="46" d="M580,455 L580,500"/><path stroke-width="26" d="M525,800 C600,782 660,772 725,762"/></g></svg>
<table><colgroup>
<col style="width:179.2px">
<col style="width:132.6px">
<col style="width:142.4px">
<col style="width:134.6px">
<col style="width:159.4px">
<col style="width:214.6px">
<col style="width:164.4px">
<col style="width:128.0px">
<col style="width:100.4px">
<col style="width:68.2px">
<col style="width:64.4px">
<col style="width:79.8px">
</colgroup><thead><tr>
<th><span class="h" style="transform:scaleX(0.924)">CITIZEN</span><br><span class="h" style="transform:scaleX(0.931)">REPORTING ID</span></th>
<th><span class="h" style="transform:scaleX(0.871)">CREATE</span><br><span class="h" style="transform:scaleX(0.916)">DATE</span></th>
<th><span class="h" style="transform:scaleX(0.957)">INCIDENT</span><br><span class="h" style="transform:scaleX(0.916)">DATE</span></th>
<th><span class="h" style="transform:scaleX(0.957)">INCIDENT</span><br><span class="h" style="transform:scaleX(0.926)">TIME</span></th>
<th><span class="h" style="transform:scaleX(0.934)">SUBMIT BY</span></th>
<th><span class="h" style="transform:scaleX(0.926)">INCIDENT TYPE</span></th>
<th><span class="h" style="transform:scaleX(0.957)">INCIDENT</span><br><span class="h" style="transform:scaleX(0.94)">LOCATION</span></th>
<th><span class="h" style="transform:scaleX(0.888)">CITY</span></th>
<th><span class="h" style="transform:scaleX(0.897)">STATE</span></th>
<th><span class="h" style="transform:scaleX(0.942)">VIEW</span></th>
<th><span class="h" style="transform:scaleX(0.926)">EDIT</span></th>
<th><span class="h" style="transform:scaleX(0.998)">Delete</span></th>
</tr></thead><tbody>
<tr class="d">
<td><span class="c c1">10057</span></td>
<td><span class="c c2">12/13/2022</span></td>
<td><span class="c c2">12/13/2022</span></td>
<td><span class="c c4">07:00 AM</span></td>
<td><span class="c">Michael<br>Raymond</span></td>
<td><span class="c">Wellness Check</span></td>
<td><span class="c">123 main st</span></td>
<td><span class="c">lombard</span></td>
<td><span class="c">Illinois</span></td>
<td><svg class="iv" width="26" height="26"><use href="#iv"/></svg></td><td><svg class="ie" width="36" height="32"><use href="#ie"/></svg></td><td><svg class="id" width="21" height="21"><use href="#id"/></svg></td></tr>
<tr class="s">
<td><span class="c c1">10056</span></td>
<td><span class="c c2">12/08/2022</span></td>
<td><span class="c c2">12/08/2022</span></td>
<td><span class="c c4">03:01 AM</span></td>
<td><span class="c">Michael Smith</span></td>
<td><span class="c">Crime Tip</span></td>
<td><span class="c">123 Main st</span></td>
<td><span class="c">Lombard</span></td>
<td><span class="c">Illinois</span></td>
<td><svg class="iv" width="26" height="26"><use href="#iv"/></svg></td><td><svg class="ie" width="36" height="32"><use href="#ie"/></svg></td><td><svg class="id" width="21" height="21"><use href="#id"/></svg></td></tr>
<tr class="d">
<td><span class="c c1">10055</span></td>
<td><span class="c c2">10/04/2022</span></td>
<td><span class="c c2">10/04/2022</span></td>
<td><span class="c c4">04:03 PM</span></td>
<td><span class="c">miek celano</span></td>
<td><span class="c">Annoying or<br>Harassing Phone Calls</span></td>
<td><span class="c">12 main street</span></td>
<td><span class="c">palatine</span></td>
<td><span class="c">Illinois</span></td>
<td><svg class="iv" width="26" height="26"><use href="#iv"/></svg></td><td><svg class="ie" width="36" height="32"><use href="#ie"/></svg></td><td><svg class="id" width="21" height="21"><use href="#id"/></svg></td></tr>
<tr class="d">
<td><span class="c c1">10054</span></td>
<td><span class="c c2">09/07/2022</span></td>
<td><span class="c c2">09/07/2022</span></td>
<td><span class="c c4">03:02 PM</span></td>
<td><span class="c">Russ REal</span></td>
<td><span class="c">Annoying or<br>Harassing Phone Calls</span></td>
<td><span class="c">123 Main</span></td>
<td><span class="c">Lombard</span></td>
<td><span class="c">Illinois</span></td>
<td><svg class="iv" width="26" height="26"><use href="#iv"/></svg></td><td><svg class="ie" width="36" height="32"><use href="#ie"/></svg></td><td><svg class="id" width="21" height="21"><use href="#id"/></svg></td></tr>
<tr class="s">
<td><span class="c c1">10053</span></td>
<td><span class="c c2">08/04/2022</span></td>
<td><span class="c c2">08/04/2022</span></td>
<td><span class="c c4">03:02 PM</span></td>
<td><span class="c">Mike celano</span></td>
<td><span class="c">Crime Tip</span></td>
<td><span class="c">123 main street</span></td>
<td><span class="c">lombard</span></td>
<td><span class="c">Illinois</span></td>
<td><svg class="iv" width="26" height="26"><use href="#iv"/></svg></td><td><svg class="ie" width="36" height="32"><use href="#ie"/></svg></td><td><svg class="id" width="21" height="21"><use href="#id"/></svg></td></tr>
<tr class="s">
<td><span class="c c1">10052</span></td>
<td><span class="c c2">07/14/2022</span></td>
<td><span class="c c2">07/14/2022</span></td>
<td><span class="c c4">05:04 PM</span></td>
<td><span class="c">Mike Celano</span></td>
<td><span class="c">Identity Theft</span></td>
<td><span class="c">123 main</span></td>
<td><span class="c">palatine</span></td>
<td><span class="c">Arizona</span></td>
<td><svg class="iv" width="26" height="26"><use href="#iv"/></svg></td><td><svg class="ie" width="36" height="32"><use href="#ie"/></svg></td><td><svg class="id" width="21" height="21"><use href="#id"/></svg></td></tr>
<tr class="d">
<td><span class="c c1">10051</span></td>
<td><span class="c c2">06/07/2022</span></td>
<td><span class="c c2">03/01/2022</span></td>
<td><span class="c c4">03:03 PM</span></td>
<td><span class="c">Tom Laird</span></td>
<td><span class="c">Damage to Property</span></td>
<td><span class="c">63rd and main<br>st</span></td>
<td><span class="c">darien</span></td>
<td><span class="c">Illinois</span></td>
<td><svg class="iv" width="26" height="26"><use href="#iv"/></svg></td><td><svg class="ie" width="36" height="32"><use href="#ie"/></svg></td><td><svg class="id" width="21" height="21"><use href="#id"/></svg></td></tr>
<tr class="s">
<td><span class="c c1">10050</span></td>
<td><span class="c c2">02/28/2022</span></td>
<td><span class="c c2">02/27/2022</span></td>
<td><span class="c c4">06:00 AM</span></td>
<td><span class="c">Ethan Laird</span></td>
<td><span class="c">Lost Article</span></td>
<td><span class="c">123 main st</span></td>
<td><span class="c">darien</span></td>
<td><span class="c">Illinois</span></td>
<td><svg class="iv" width="26" height="26"><use href="#iv"/></svg></td><td><svg class="ie" width="36" height="32"><use href="#ie"/></svg></td><td><svg class="id" width="21" height="21"><use href="#id"/></svg></td></tr>
<tr class="s">
<td><span class="c c1">10044</span></td>
<td><span class="c c2">01/25/2022</span></td>
<td><span class="c c2">01/25/2022</span></td>
<td><span class="c c4">04:02 PM</span></td>
<td><span class="c">Russ Real</span></td>
<td><span class="c">Crime Tip</span></td>
<td><span class="c">555 Main St.</span></td>
<td><span class="c">Lombard</span></td>
<td><span class="c">Illinois</span></td>
<td><svg class="iv" width="26" height="26"><use href="#iv"/></svg></td><td><svg class="ie" width="36" height="32"><use href="#ie"/></svg></td><td><svg class="id" width="21" height="21"><use href="#id"/></svg></td></tr>
<tr class="s">
<td><span class="c c1">10043</span></td>
<td><span class="c c2">01/12/2022</span></td>
<td><span class="c c2">01/12/2022</span></td>
<td><span class="c c4">01:01 PM</span></td>
<td><span class="c">mike clenoa</span></td>
<td><span class="c">Crime Tip</span></td>
<td><span class="c">123 main</span></td>
<td><span class="c">lombard</span></td>
<td><span class="c">Arkansas</span></td>
<td><svg class="iv" width="26" height="26"><use href="#iv"/></svg></td><td><svg class="ie" width="36" height="32"><use href="#ie"/></svg></td><td><svg class="id" width="21" height="21"><use href="#id"/></svg></td></tr>
<tr class="d">
<td><span class="c c1">10040</span></td>
<td><span class="c c2">10/20/2021</span></td>
<td><span class="c c2">10/15/2021</span></td>
<td><span class="c c4">02:02 AM</span></td>
<td><span class="c">Russ Real</span></td>
<td><span class="c">Annoying or<br>Harassing Phone Calls</span></td>
<td><span class="c">123 Main St.</span></td>
<td><span class="c">Lombard</span></td>
<td><span class="c">Illinois</span></td>
<td><svg class="iv" width="26" height="26"><use href="#iv"/></svg></td><td><svg class="ie" width="36" height="32"><use href="#ie"/></svg></td><td><svg class="id" width="21" height="21"><use href="#id"/></svg></td></tr>
<tr class="s">
<td><span class="c c1">10037</span></td>
<td><span class="c c2">10/20/2021</span></td>
<td><span class="c c2">10/13/2021</span></td>
<td><span class="c c4">03:02 PM</span></td>
<td><span class="c">Ben Laird</span></td>
<td><span class="c">Crime Tip</span></td>
<td><span class="c">123 Main</span></td>
<td><span class="c">Lombard</span></td>
<td><span class="c">Illinois</span></td>
<td><svg class="iv" width="26" height="26"><use href="#iv"/></svg></td><td><svg class="ie" width="36" height="32"><use href="#ie"/></svg></td><td><svg class="id" width="21" height="21"><use href="#id"/></svg></td></tr>
<tr class="s">
<td><span class="c c1">10035</span></td>
<td><span class="c c2">10/20/2021</span></td>
<td><span class="c c2">10/13/2021</span></td>
<td><span class="c c4">03:02 AM</span></td>
<td><span class="c">Rory Real</span></td>
<td><span class="c">Crime Tip</span></td>
<td><span class="c">123 Main St.</span></td>
<td><span class="c">Lombard</span></td>
<td><span class="c">Illinois</span></td>
<td><svg class="iv" width="26" height="26"><use href="#iv"/></svg></td><td><svg class="ie" width="36" height="32"><use href="#ie"/></svg></td><td><svg class="id" width="21" height="21"><use href="#id"/></svg></td></tr>
</tbody></table>
</div></body></html>
